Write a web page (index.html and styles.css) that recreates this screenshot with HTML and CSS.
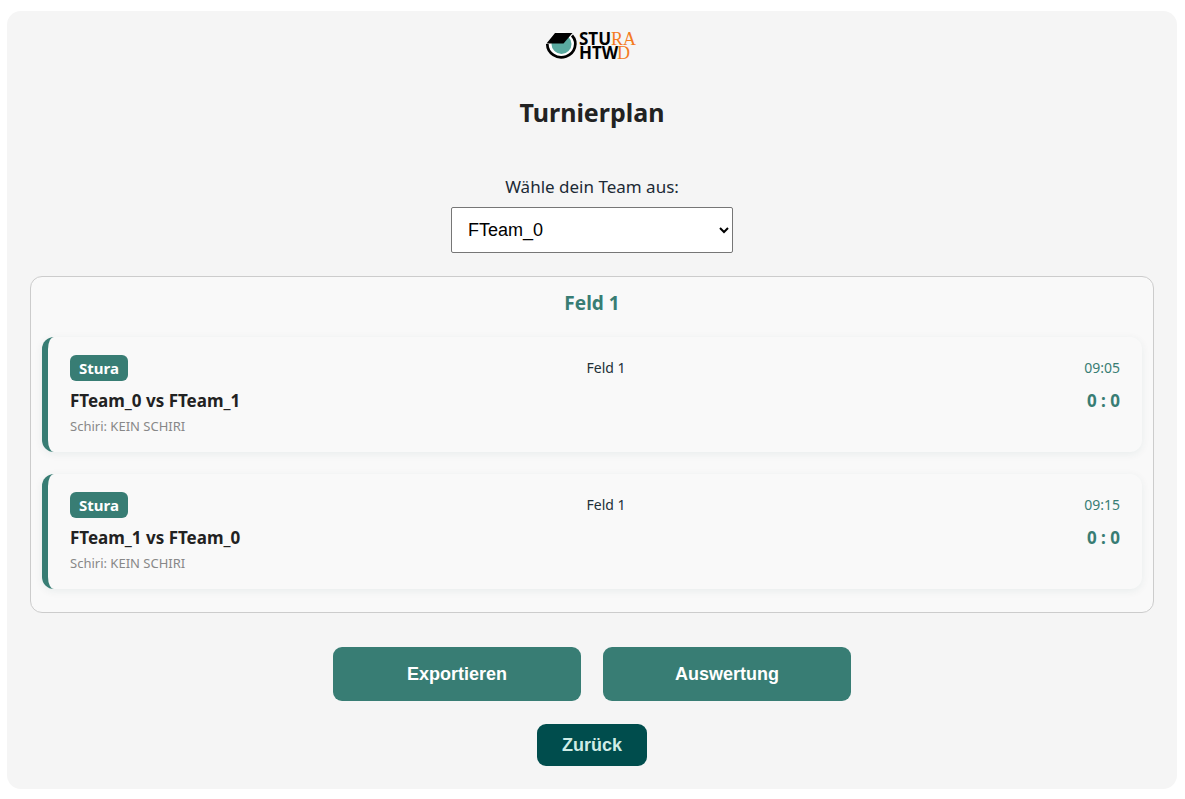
FILE: index.html
```html
<!DOCTYPE html>
<html lang="de">
<head>
<meta charset="utf-8">
<meta name="viewport" content="width=device-width, initial-scale=1">
<title>Turnierplan</title>
<link rel="stylesheet" href="styles.css">
</head>
<body>
<main class="page">
  <svg class="logo" viewBox="0 0 92 36" role="img" aria-label="StuRa HTWD">
    <circle cx="15" cy="16" r="12.500" fill="#fff"/>
    <circle cx="15.500" cy="16" r="10" fill="#5aaaa0"/>
    <path d="M1.300 16A14 13.200 0 1 0 26 7.500" fill="none" stroke="#000" stroke-width="2.700"/>
    <path d="M9 5H26.500L17.500 15.500H0.500Z" fill="#000"/>
    <g class="logo-bold"><text x="33" y="17">STU</text><text x="33" y="31">HTW</text></g>
    <g class="logo-thin"><text x="65" y="17">RA</text><text x="71" y="31">D</text></g>
  </svg>
  <h1 class="title">Turnierplan</h1>
  <label class="team-label" for="team">Wähle dein Team aus:</label>
  <select class="team-select" id="team">
    <option>FTeam_0</option>
    <option>FTeam_1</option>
  </select>
  <section class="field">
    <h2 class="field-title">Feld 1</h2>
    <article class="match">
      <div class="match-row match-head">
        <span class="badge">Stura</span>
        <span class="place">Feld 1</span>
        <time class="time">09:05</time>
      </div>
      <div class="match-row match-main">
        <span class="teams">FTeam_0 vs FTeam_1</span>
        <span class="score">0 : 0</span>
      </div>
      <div class="referee">Schiri: KEIN SCHIRI</div>
    </article>
    <article class="match">
      <div class="match-row match-head">
        <span class="badge">Stura</span>
        <span class="place">Feld 1</span>
        <time class="time">09:15</time>
      </div>
      <div class="match-row match-main">
        <span class="teams">FTeam_1 vs FTeam_0</span>
        <span class="score">0 : 0</span>
      </div>
      <div class="referee">Schiri: KEIN SCHIRI</div>
    </article>
  </section>
  <div class="actions">
    <button class="button" type="button">Exportieren</button>
    <button class="button" type="button">Auswertung</button>
  </div>
  <button class="back" type="button">Zurück</button>
</main>
</body>
</html>
```
FILE: styles.css
```css
* { box-sizing: border-box; }
body {
  margin: 11px 8px 10px 7px;
  background: #fff;
  color: #222;
  font-family: "Segoe UI", "Noto Sans", sans-serif;
}
.page {
  display: flex;
  flex-direction: column;
  align-items: center;
  padding: 17px 23px 23px;
  background: #f5f5f5;
  border-radius: 14px;
}
.logo { width: 92px; height: 36px; overflow: visible; }
.logo-bold { font: 700 17px "Noto Sans", sans-serif; fill: #000; }
.logo-thin { font: 400 18px "Liberation Serif", serif; fill: #f47a20; }
.title {
  margin: 28px 0 0;
  font-size: 25px;
  line-height: 40px;
}
.team-label {
  margin-top: 43px;
  font-size: 17px;
  line-height: 24px;
  color: #1c2a36;
}
.team-select {
  width: 282px;
  height: 46px;
  margin-top: 8px;
  padding: 0 12px;
  border: 1px solid #767676;
  border-radius: 2px;
  background: #fff;
  color: #000;
  font: 18px "Liberation Sans", Arial, sans-serif;
}
.field {
  align-self: stretch;
  display: flex;
  flex-direction: column;
  gap: 22px;
  margin-top: 23px;
  padding: 14px 11px 23px;
  background: #f9f9f9;
  border: 1px solid #ccc;
  border-radius: 12px;
}
.field-title {
  margin: 0;
  font-size: 19px;
  line-height: 24px;
  text-align: center;
  color: #387d74;
}
.match {
  padding: 18px 22px 16px;
  background: #f9f9f9;
  border-left: 6px solid #387d74;
  border-radius: 12px;
  box-shadow: 0 2px 8px rgba(0, 77, 77, 0.07);
}
.match-row {
  display: flex;
  justify-content: space-between;
}
.match-head { font-size: 14px; line-height: 26px; }
.badge {
  padding: 0 9px;
  border-radius: 6px;
  background: #387d74;
  color: #fff;
  font-size: 15px;
  font-weight: 700;
}
.place { color: #223038; }
.time { color: #387d74; }
.match-main {
  margin-top: 7px;
  font-size: 17px;
  line-height: 26px;
  font-weight: 700;
}
.score { color: #387d74; }
.referee {
  margin-top: 2px;
  font-size: 13px;
  line-height: 20px;
  color: #888;
}
.actions {
  display: flex;
  gap: 22px;
  margin-top: 34px;
}
.button, .back {
  border: 0;
  border-radius: 9px;
  font: 700 18px "Liberation Sans", Arial, sans-serif;
}
.button {
  width: 248px;
  height: 54px;
  background: #387d74;
  color: #fff;
}
.back {
  height: 42px;
  margin-top: 23px;
  padding: 0 25px;
  background: #004d4d;
  color: #d0ece6;
}
```
